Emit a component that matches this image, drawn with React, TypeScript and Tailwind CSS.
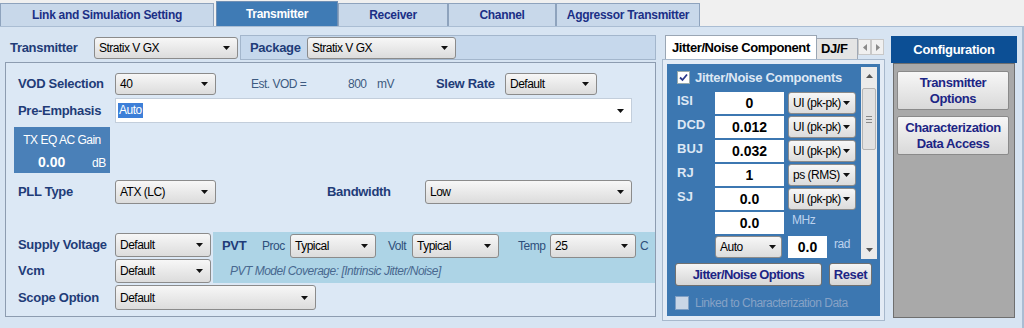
const narrow = "whitespace-nowrap tracking-[-0.5px]";

const Arrow = () => (
  <svg width="7" height="4" viewBox="0 0 7 4" className="shrink-0">
    <path d="M0 0h7L3.5 4z" fill="#111" />
  </svg>
);

type ComboProps = { value: string; className: string };

const Combo = ({ value, className }: ComboProps) => (
  <div
    className={`flex shrink-0 items-center justify-between overflow-hidden rounded-[3px] border border-[#8b8b8b] bg-linear-to-b from-[#f7f7f7] to-[#dcdcdc] pl-[4px] pr-[7px] text-[12px] text-black ${narrow} ${className}`}
  >
    <span>{value}</span>
    <Arrow />
  </div>
);

const Label = ({ text, className = "" }: { text: string; className?: string }) => (
  <span className={`shrink-0 whitespace-nowrap text-[13px] font-bold tracking-[-0.3px] text-[#1f3c78] ${className}`}>{text}</span>
);

const tabs = [
  { name: "Link and Simulation Setting", w: "w-[214px]" },
  { name: "Transmitter", w: "w-[122px]", active: true },
  { name: "Receiver", w: "w-[110px]" },
  { name: "Channel", w: "w-[108px]" },
  { name: "Aggressor Transmitter", w: "w-[144px]" },
];

const TabStrip = () => (
  <div className="flex h-[26px] items-end">
    {tabs.map((t, i) =>
      t.active ? (
        <div
          key={i}
          className={`ml-[2px] flex h-[25px] items-center justify-center border border-b-0 border-[#6f8fb4] bg-[#3f7bb5] text-[12px] font-bold tracking-[-0.3px] text-white ${t.w}`}
        >
          {t.name}
        </div>
      ) : (
        <div
          key={i}
          className={`flex h-[23px] items-center justify-center border border-b-0 border-[#8ea3bd] bg-[#c8d8ea] text-[12px] font-bold tracking-[-0.3px] text-[#1b2f86] ${t.w}`}
        >
          {t.name}
        </div>
      )
    )}
  </div>
);

const TransmitterPanel = () => (
  <div className="w-[660px] shrink-0 pt-[8px]">
    <div className="flex h-[25px]">
      <div className="flex w-[240px] items-center pl-[10px]">
        <Label text="Transmitter" className="w-[84px]" />
        <Combo value="Stratix V GX" className="h-[22px] w-[144px]" />
      </div>
      <div className="flex w-[416px] items-center border border-[#a3b6cc] bg-[#c6d8ec] pl-[9px]">
        <Label text="Package" className="w-[57px]" />
        <Combo value="Stratix V GX" className="h-[22px] w-[149px]" />
      </div>
    </div>

    <div className="ml-[5px] mt-[2px] h-[255px] w-[651px] border border-[#8d9cb0] bg-[#dce8f5] pl-[12px] pt-[10px]">
      <div className="flex h-[22px] items-center">
        <Label text="VOD Selection" className="w-[97px]" />
        <Combo value="40" className="h-[22px] w-[101px]" />
        <span className={`ml-[35px] w-[97px] text-[12px] text-[#3d5a80] ${narrow}`}>Est. VOD =</span>
        <span className={`w-[29px] text-[12px] text-[#3d5a80] ${narrow}`}>800</span>
        <span className={`w-[59px] text-[12px] text-[#3d5a80] ${narrow}`}>mV</span>
        <Label text="Slew Rate" className="w-[69px]" />
        <Combo value="Default" className="h-[22px] w-[92px]" />
      </div>

      <div className="mt-[3px] flex h-[25px] items-center">
        <Label text="Pre-Emphasis" className="w-[97px]" />
        <div className="flex h-[25px] w-[517px] items-center justify-between border border-[#c3cedb] bg-white pl-[2px] pr-[7px]">
          <span className={`bg-[#3d7fd8] px-[1px] text-[12px] leading-[15px] text-white ${narrow}`}>Auto</span>
          <Arrow />
        </div>
      </div>

      <div className="ml-[-4px] mt-[4px] flex h-[46px] w-[96px] flex-col bg-[#4a80b8] text-white">
        <div className={`pt-[4px] text-center text-[12px] ${narrow}`}>TX EQ AC Gain</div>
        <div className="mt-[3px] flex items-center pl-[24px]">
          <span className="w-[54px] text-[14px] font-bold">0.00</span>
          <span className={`text-[12px] ${narrow}`}>dB</span>
        </div>
      </div>

      <div className="mt-[7px] flex h-[24px] items-center">
        <Label text="PLL Type" className="w-[97px]" />
        <Combo value="ATX (LC)" className="h-[24px] w-[101px]" />
        <Label text="Bandwidth" className="ml-[111px] w-[98px]" />
        <Combo value="Low" className="h-[24px] w-[207px]" />
      </div>

      <div className="mt-[28px] flex h-[51px]">
        <div className="flex w-[193px] flex-col gap-[2px] pt-[1px]">
          <div className="flex h-[24px] items-center">
            <Label text="Supply Voltage" className="w-[97px]" />
            <Combo value="Default" className="h-[24px] w-[96px]" />
          </div>
          <div className="flex h-[24px] items-center">
            <Label text="Vcm" className="w-[97px]" />
            <Combo value="Default" className="h-[24px] w-[96px]" />
          </div>
        </div>
        <div className="ml-[2px] flex flex-1 flex-col bg-[#add4e6]">
          <div className="flex h-[26px] items-center pl-[9px] pt-[1px]">
            <Label text="PVT" className="w-[40px]" />
            <span className={`w-[28px] text-[12px] text-[#2d4f7a] ${narrow}`}>Proc</span>
            <Combo value="Typical" className="h-[24px] w-[86px]" />
            <span className={`ml-[12px] w-[24px] text-[12px] text-[#2d4f7a] ${narrow}`}>Volt</span>
            <Combo value="Typical" className="h-[24px] w-[87px]" />
            <span className={`ml-[19px] w-[32px] text-[12px] text-[#2d4f7a] ${narrow}`}>Temp</span>
            <Combo value="25" className="h-[24px] w-[86px]" />
            <span className={`ml-[4px] text-[12px] text-[#2d4f7a] ${narrow}`}>C</span>
          </div>
          <div className={`flex h-[25px] items-center pl-[17px] text-[12px] italic text-[#48688f] ${narrow}`}>
            PVT Model Coverage: [Intrinsic Jitter/Noise]
          </div>
        </div>
      </div>

      <div className="mt-[2px] flex h-[25px] items-center">
        <Label text="Scope Option" className="w-[97px]" />
        <Combo value="Default" className="h-[25px] w-[201px]" />
      </div>
    </div>
  </div>
);

const jitterRows = [
  { name: "ISI", value: "0", unit: "UI (pk-pk)" },
  { name: "DCD", value: "0.012", unit: "UI (pk-pk)" },
  { name: "BUJ", value: "0.032", unit: "UI (pk-pk)" },
  { name: "RJ", value: "1", unit: "ps (RMS)" },
  { name: "SJ", value: "0.0", unit: "UI (pk-pk)" },
];

const Field = ({ value, className }: { value: string; className: string }) => (
  <div className={`flex h-[22px] shrink-0 items-center justify-center bg-white text-[14px] font-bold text-black ${className}`}>
    {value}
  </div>
);

const ScrollBtn = ({ d }: { d: string }) => (
  <div className="flex h-[16px] w-[13px] items-center justify-center border border-[#c8c8c8] bg-[#f0f0f0]">
    <svg width="4" height="7" viewBox="0 0 4 7">
      <path d={d} fill="#8a8a8a" />
    </svg>
  </div>
);

const JitterPanel = () => (
  <div className="ml-[2px] w-[223px] shrink-0 pt-[8px]">
    <div className="flex h-[24px] items-end">
      <div className="ml-[3px] flex h-[24px] w-[152px] items-center whitespace-nowrap border border-b-0 border-[#9aa6b4] bg-white pl-[6px] text-[13px] font-bold tracking-[-0.4px] text-black">
        Jitter/Noise Component
      </div>
      <div className="flex h-[21px] w-[41px] items-center overflow-hidden border border-b-0 border-l-0 border-[#a0a8b4] bg-[#e4e4e4] pl-[4px] text-[13px] font-bold tracking-[-0.4px] text-black">
        DJ/F
      </div>
      <div className="mb-[4px] flex">
        <ScrollBtn d="M4 0v7L0 3.5z" />
        <ScrollBtn d="M0 0v7l4-3.5z" />
      </div>
    </div>
    <div className="h-[262px] border border-[#a7b8cc] bg-[#e3ebf5] p-[4px]">
      <div className="flex h-[252px] flex-col bg-[#3c77b1]">
        <div className="flex">
          <div className="w-[190px] pl-[10px] pt-[7px]">
            <div className="flex h-[13px] items-center">
              <div className="flex h-[13px] w-[13px] items-center justify-center border border-[#9aa] bg-white">
                <svg width="9" height="9" viewBox="0 0 9 9">
                  <path d="M1 4.5l2.5 2.5L8 1.5" stroke="#2b3a8c" strokeWidth="1.8" fill="none" />
                </svg>
              </div>
              <span className="ml-[5px] whitespace-nowrap text-[13px] font-bold tracking-[-0.3px] text-[#dde7f4]">
                Jitter/Noise Components
              </span>
            </div>
            <div className="mt-[8px] flex flex-col gap-[2px]">
              {jitterRows.map((r) => (
                <div key={r.name} className="flex h-[22px]">
                  <span className="w-[38px] text-[13px] font-bold leading-[18px] text-[#dde7f4]">{r.name}</span>
                  <Field value={r.value} className="w-[69px]" />
                  <Combo value={r.unit} className="ml-[4px] h-[22px] w-[68px] !pr-[5px]" />
                </div>
              ))}
              <div className="flex h-[22px]">
                <span className="w-[38px]" />
                <Field value="0.0" className="w-[69px]" />
                <span className={`ml-[8px] text-[12px] leading-[16px] text-[#bcd2ee] ${narrow}`}>MHz</span>
              </div>
              <div className="flex h-[22px]">
                <span className="w-[38px]" />
                <Combo value="Auto" className="h-[22px] w-[67px] !pr-[5px]" />
                <Field value="0.0" className="ml-[6px] w-[39px]" />
                <span className={`ml-[7px] text-[12px] leading-[16px] text-[#bcd2ee] ${narrow}`}>rad</span>
              </div>
            </div>
          </div>
          <div className="ml-[4px] mt-[3px] flex h-[192px] w-[16px] flex-col bg-[#ebebeb]">
            <div className="flex h-[18px] items-center justify-center">
              <svg width="7" height="4" viewBox="0 0 7 4">
                <path d="M0 4h7L3.5 0z" fill="#555" />
              </svg>
            </div>
            <div className="mx-[1px] mt-[3px] flex h-[62px] flex-col items-center justify-center gap-[2px] rounded-[2px] border border-[#b5b5b5] bg-[#e2e2e2]">
              <div className="h-px w-[6px] bg-[#888]" />
              <div className="h-px w-[6px] bg-[#888]" />
              <div className="h-px w-[6px] bg-[#888]" />
            </div>
            <div className="flex-1" />
            <div className="flex h-[18px] items-center justify-center">
              <svg width="7" height="4" viewBox="0 0 7 4">
                <path d="M0 0h7L3.5 4z" fill="#555" />
              </svg>
            </div>
          </div>
        </div>
        <div className="mt-[4px] flex pl-[8px]">
          <div className="flex h-[23px] w-[147px] items-center justify-center whitespace-nowrap rounded-[3px] border border-[#707070] bg-linear-to-b from-[#f5f5f5] to-[#d6d6d6] text-[13px] font-bold tracking-[-0.6px] text-[#1c2585]">
            Jitter/Noise Options
          </div>
          <div className="ml-[7px] flex h-[23px] w-[43px] items-center justify-center rounded-[3px] border border-[#707070] bg-linear-to-b from-[#f5f5f5] to-[#d6d6d6] text-[13px] font-bold tracking-[-0.4px] text-[#1c2585]">
            Reset
          </div>
        </div>
        <div className="mt-[8px] flex items-center pl-[8px]">
          <div className="h-[14px] w-[14px] border border-[#7f9fc4] bg-[#c9d6e6]" />
          <span className={`ml-[6px] text-[12px] text-[#86a2c6] ${narrow}`}>Linked to Characterization Data</span>
        </div>
      </div>
    </div>
  </div>
);

const ConfigPanel = () => (
  <div className="ml-[6px] w-[126px] shrink-0 pt-[9px]">
    <div className="flex h-[27px] items-center justify-center bg-[#0c4f95] text-[13px] font-bold tracking-[-0.3px] text-white">
      Configuration
    </div>
    <div className="ml-[2px] h-[255px] w-[122px] border border-[#6f6f6f] bg-[#a9a9a9] pl-[3px] pt-[7px]">
      <div className="flex h-[39px] w-[112px] items-center justify-center rounded-[2px] border border-[#8a8a8a] bg-linear-to-b from-[#f7f7f7] to-[#d9d9d9] text-center text-[13px] font-bold leading-[16px] tracking-[-0.4px] text-[#1c2585]">
        Transmitter
        <br />
        Options
      </div>
      <div className="mt-[6px] flex h-[39px] w-[112px] items-center justify-center rounded-[2px] border border-[#8a8a8a] bg-linear-to-b from-[#f7f7f7] to-[#d9d9d9] text-center text-[13px] font-bold leading-[16px] tracking-[-0.4px] text-[#1c2585]">
        Characterization
        <br />
        Data Access
      </div>
    </div>
  </div>
);

export default function App() {
  return (
    <div className="h-[328px] w-[1024px] overflow-hidden bg-[#f0f0f0] font-['Liberation_Sans',Arial,sans-serif]">
      <TabStrip />
      <div className="flex h-[302px] border-r-2 border-t border-[#aabdd3] bg-[#d7e4f2]">
        <TransmitterPanel />
        <JitterPanel />
        <ConfigPanel />
      </div>
    </div>
  );
}
